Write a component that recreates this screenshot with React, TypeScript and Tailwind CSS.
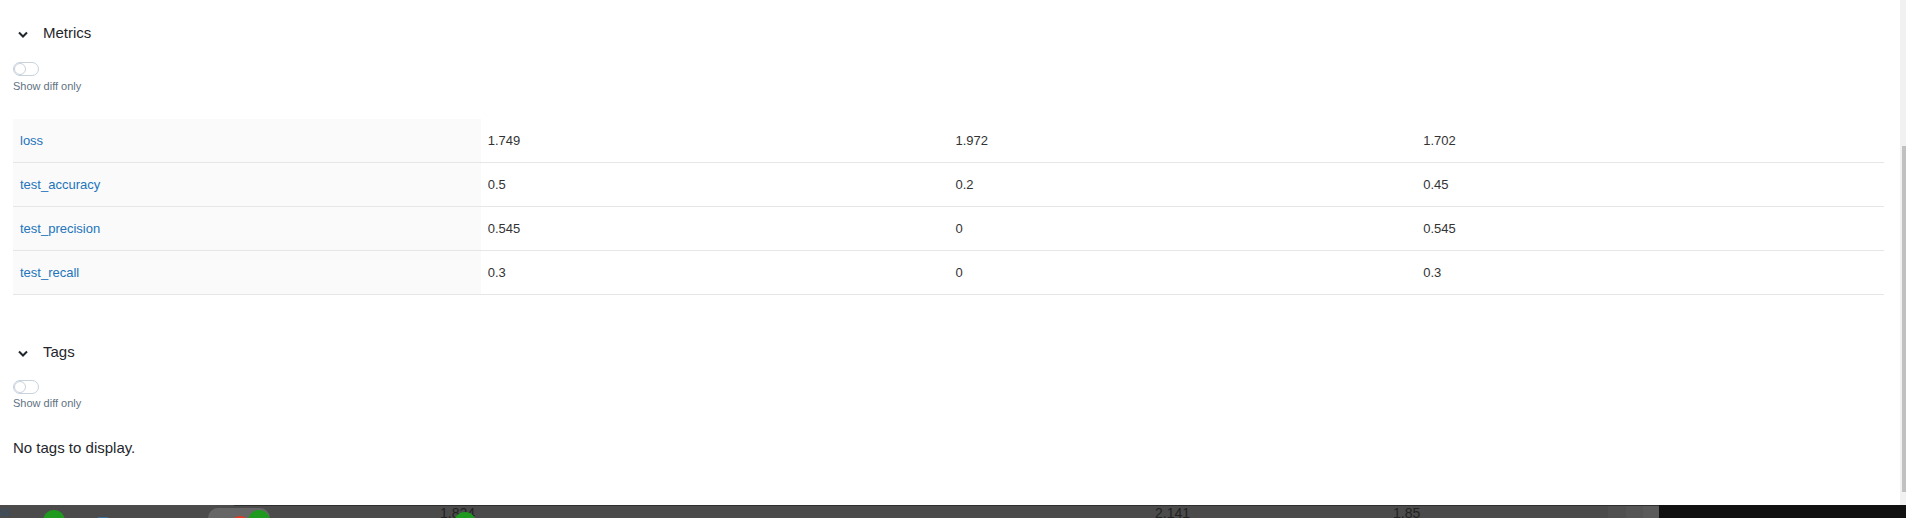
import React from 'react';

type MetricRow = { key: string; values: string[] };

const METRICS: MetricRow[] = [
  { key: 'loss', values: ['1.749', '1.972', '1.702'] },
  { key: 'test_accuracy', values: ['0.5', '0.2', '0.45'] },
  { key: 'test_precision', values: ['0.545', '0', '0.545'] },
  { key: 'test_recall', values: ['0.3', '0', '0.3'] },
];

function Chevron() {
  return (
    <svg width="10" height="7" viewBox="0 0 10 7" className="ml-[5px] mt-[3px] shrink-0">
      <polyline points="1,1.5 5,5.5 9,1.5" fill="none" stroke="#1f272d" strokeWidth="2" />
    </svg>
  );
}

function SectionHeader({ title, className }: { title: string; className: string }) {
  return (
    <div className={`flex h-[24px] items-center ${className}`}>
      <Chevron />
      <span className="ml-[15px] text-[15px] text-[#1f272d]">{title}</span>
    </div>
  );
}

function Toggle({ className }: { className: string }) {
  return (
    <div className={className}>
      <span className="flex h-[14px] w-[26px] items-center rounded-full border border-[#c8d2dc] bg-white">
        <span className="h-[12px] w-[12px] rounded-full border border-[#c8d2dc] bg-white" />
      </span>
    </div>
  );
}

function DiffLabel({ className }: { className: string }) {
  return <div className={`text-[11px] leading-[13px] text-[#5f7281] ${className}`}>Show diff only</div>;
}

function MetricsTable() {
  return (
    <div className="mt-[26px]">
      {METRICS.map(row => (
        <div key={row.key} className="grid h-[44px] grid-cols-4 border-b border-[#e6e6e6] text-[13px]">
          <div className="flex items-center bg-[#fafafa] px-[7px]">
            <span className="text-[#2374bb]">{row.key}</span>
          </div>
          {row.values.map((v, i) => (
            <div key={i} className="flex items-center px-[7px] text-[#333333]">
              {v}
            </div>
          ))}
        </div>
      ))}
    </div>
  );
}

function BottomStrip() {
  // leftover piece of the chart canvas peeking under the panel
  return (
    <div className="relative h-[13px] w-full overflow-hidden bg-[#4b4b4b]">
      <div className="absolute left-[234px] top-0 h-px w-[1500px] bg-[#2e2e2e]" />
      <span className="absolute left-[-2px] top-[1px] text-[12px] leading-[12px] text-[#35516d]">ss</span>
      <div className="absolute left-[43px] top-[5px] h-[22px] w-[22px] rounded-full bg-[#1f9a1f]" />
      <div className="absolute left-[97px] top-[12px] h-[4px] w-[12px] rounded-sm bg-[#3c6e9a]" />
      <div className="absolute left-[208px] top-[3px] h-[20px] w-[62px] rounded-full bg-[#666666]" />
      <div className="absolute left-[230px] top-[11px] h-[20px] w-[20px] rounded-full bg-[#e33a26]" />
      <div className="absolute left-[248px] top-[5px] h-[22px] w-[22px] rounded-full bg-[#1f9a1f]" />
      <span className="absolute left-[440px] top-[1px] text-[14px] leading-[14px] text-[#222222]">1.824</span>
      <div className="absolute left-[454px] top-[7px] h-[22px] w-[22px] rounded-full bg-[#1f9a1f]" />
      <span className="absolute left-[1155px] top-[1px] text-[14px] leading-[14px] text-[#222222]">2.141</span>
      <span className="absolute left-[1393px] top-[1px] text-[14px] leading-[14px] text-[#222222]">1.85</span>
      <div className="absolute left-[1608px] top-px h-[12px] w-[18px] bg-[#505050]" />
      <div className="absolute left-[1626px] top-px h-[12px] w-[17px] bg-[#555555]" />
      <div className="absolute left-[1643px] top-px h-[12px] w-[16px] bg-[#5a5a5a]" />
      <div className="absolute left-[1659px] top-0 h-[13px] w-[247px] bg-[#111111]" />
    </div>
  );
}

function Scrollbar() {
  return (
    <div className="flex h-full w-[6px] flex-col bg-[#f1f1f1]">
      <div className="h-[146px]" />
      <div className="ml-[2px] h-[346px] w-[4px] bg-[#c1c1c1]" />
    </div>
  );
}

export default function App() {
  return (
    <div className="flex h-[518px] w-[1906px] flex-col overflow-hidden bg-white font-['Liberation_Sans',Arial,sans-serif]">
      <div className="flex h-[505px]">
        <div className="flex-1 pl-[13px] pr-[16px]">
          {/* Metrics */}
          <SectionHeader title="Metrics" className="mt-[21px]" />
          <Toggle className="mt-[17px]" />
          <DiffLabel className="mt-[4px]" />
          <MetricsTable />

          {/* Tags */}
          <SectionHeader title="Tags" className="mt-[45px]" />
          <Toggle className="mt-[16px]" />
          <DiffLabel className="mt-[3px]" />
          <div className="mt-[28px] text-[15px] leading-[20px] text-[#1f272d]">No tags to display.</div>
        </div>
        <Scrollbar />
      </div>
      <BottomStrip />
    </div>
  );
}
